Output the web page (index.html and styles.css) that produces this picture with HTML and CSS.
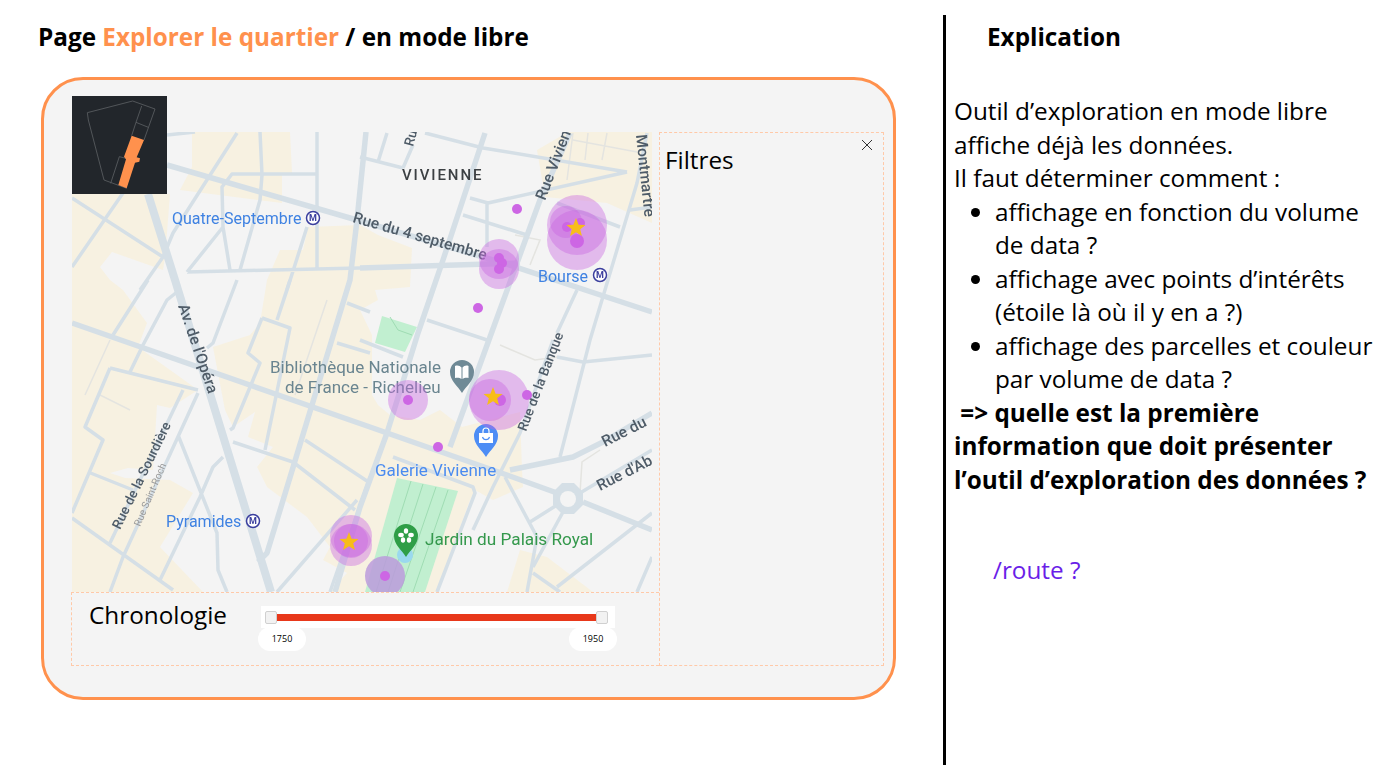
FILE: index.html
```html
<!DOCTYPE html>
<html lang="fr">
<head>
  <meta charset="UTF-8" />
  <title>Explorer le quartier</title>
  <link rel="stylesheet" href="styles.css">
</head>
<body>
  <div class="page">

    <!-- Maquette -->
    <section class="left">
      <h1 class="page-title">Page <span class="accent">Explorer le quartier</span> / en mode libre</h1>

      <div class="frame">
        <div class="map-cell">
          <svg class="minimap" viewBox="0 0 285 294">
            <path class="mini-line" d="M46 50 L182 15 L249 39 L216 132 M46 50 L49 72 L96 252 L164 277 M209 30 L192 79 L229 94 M192 79 L179 119 M142 182 L116 262 M142 182 L162 187"/>
            <path class="mini-fill" d="M179 119 L216 132 L194 184 L204 187 L202 197 L189 200 L164 277 L139 267 L162 190 L156 182 Z"/>
          </svg>

          <svg class="map" viewBox="72 132 580 460">
            <defs>
              <polygon id="star" points="0,-10 2.6,-3.3 9.5,-3.1 4.2,1.3 5.9,8.1 0,4.3 -5.9,8.1 -4.2,1.3 -9.5,-3.1 -2.6,-3.3"/>
            </defs>

            <rect class="ground" x="72" y="132" width="580" height="460"/>

            <g class="tiles">
              <!-- Ilots -->
              <g class="blocks">
                <polygon points="192,132 290,132 292,173 282,173 282,203 180,190 192,167"/>
                <polygon points="72,194 170,194 165,258 163,270 112,252 100,267 110,280 123,290 147,323 138,347 198,390 170,408 157,405 153,470 128,468 110,473 125,478 170,480 193,493 160,547 203,592 72,592"/>
                <polygon points="280,250 303,250 308,227 360,225 378,235 412,248 410,287 375,290 378,300 360,310 372,335 372,395 378,405 390,415 420,420 440,410 462,427 520,412 522,470 523,487 493,500 475,490 470,500 437,592 330,592 347,573 323,560 330,547 307,517 267,487 257,467 273,447 248,437 255,412 233,427 225,410 213,347 250,335 260,323 267,280"/>
                <polygon points="537,150 568,132 652,132 652,223 607,203 545,197"/>
                <polygon points="507,592 520,550 547,557 593,592"/>
              </g>

              <!-- Parcs -->
              <g class="parks">
                <polygon points="382,316 417,327 405,352 375,343"/>
                <polygon points="397,478 458,491 425,592 365,592"/>
              </g>
              <path class="park-line" d="M411 481 L376 592 M423 484 L388 592 M436 487 L400 592 M448 490 L413 592 M390 317 L398 330 L412 335"/>

              <!-- Rues fines -->
              <path class="thin" d="M573 133 L567 180 M588 133 L585 160 M607 133 L602 160 M573 140 L637 152 M110 340 L85 395 M100 395 L130 410 M327 300 L295 395 M500 345 L535 360 L557 357 M600 450 L582 462 L580 493 M515 235 L540 240 L530 265"/>

              <!-- Petites rues -->
              <g class="lanes">
                <path d="M237 133 L173 233 L163 257 M260 132 L262 175 L260 200 L240 270 M317 132 L317 270 M232 174 L317 174 L232 174 L222 187 L223 227 L230 270 M223 227 L187 272 M187 272 L360 268 M72 198 L163 257 L140 290 M72 267 L123 193 M307 227 L287 290 M167 135 L195 132"/>
                <path d="M148 280 L113 335 M177 292 L167 300 L143 345 L130 372 M237 280 L213 343 L207 348 M110 368 L198 390 M110 368 L85 427 L103 440 L72 513 M88 472 L133 490 M72 518 L173 590 M198 393 L123 557 L110 592 M183 390 L110 543 M178 435 L217 533 L218 570 L227 592 M223 457 L213 467 L200 497 L160 580"/>
                <path d="M290 280 L277 320 M262 318 L290 328 L265 450 M262 318 L248 353 L260 363 L233 428 L230 430 M233 442 L293 462 L355 510 M305 440 L370 483 M347 303 L370 312 M337 343 L370 353 M357 500 L277 592 M370 477 L330 592 M287 290 L277 320"/>
                <path d="M360 157 L403 168 M387 133 L378 162 M413 145 L403 168 M425 133 L483 148 L627 172 M470 198 L488 203 L627 172 M487 203 L487 247 M463 215 L527 235 M557 203 L620 227 M647 133 L637 183 L590 340 L560 457 M630 210 L652 207 M577 290 L557 333 M427 320 L487 340 M360 340 L403 357"/>
                <path d="M553 340 L520 433 L493 487 L473 530 M557 357 L583 362 L652 355 M505 477 L537 537 L527 592 M530 522 L557 505 M563 512 L533 567 M652 513 L557 587 M652 557 L637 592 M533 573 L560 592 M393 457 L473 487 L475 493 L437 592 M580 493 L652 450"/>
              </g>

              <!-- Grands axes -->
              <g class="roads">
                <path d="M167 165 L350 218 L500 262 L652 312"/>
                <path d="M360 268 L520 263"/>
                <path d="M72 323 L370 427 L507 475 L557 493 M583 502 L652 530"/>
                <path d="M148 194 L175 280 L271 592" class="avenue"/>
                <path d="M485 133 L443 260 L418 333 L387 433 L360 507 L335 592"/>
                <path d="M366 132 L357 220 L350 280 L267 553 L258 562"/>
                <path d="M570 133 L540 200 L490 337 L450 447"/>
                <path d="M510 470 L573 457 L603 442 L652 413"/>
              </g>
              <polygon class="rond" points="562,483 574,483 583,492 583,505 574,514 562,514 553,505 553,492"/>
              <circle class="rond-hole" cx="568" cy="499" r="8"/>

              <!-- Noms des rues -->
              <text class="district" x="402" y="180">VIVIENNE</text>
              <text class="street" transform="translate(352 222) rotate(16)">Rue du 4 septembre</text>
              <text class="street" transform="translate(545 201) rotate(-69)">Rue Vivien</text>
              <text class="street" transform="translate(636 135) rotate(84)">Montmartre</text>
              <text class="street small" transform="translate(413 147) rotate(-75)">Ru</text>
              <text class="street" transform="translate(178 306) rotate(71)">Av. de l'Opéra</text>
              <text class="street small" transform="translate(120 530) rotate(-64)">Rue de la Sourdière</text>
              <text class="street tiny" transform="translate(140 527) rotate(-67)">Rue Saint-Roch</text>
              <text class="street small" transform="translate(526 432) rotate(-69)">Rue de la Banque</text>
              <text class="street" transform="translate(605 447) rotate(-27)">Rue du</text>
              <text class="street" transform="translate(600 491) rotate(-27)">Rue d'Ab</text>

              <!-- Lieux -->
              <text class="poi transit" x="172" y="224">Quatre-Septembre</text>
              <text class="poi transit" x="538" y="282">Bourse</text>
              <text class="poi transit" x="166" y="527">Pyramides</text>
              <text class="poi grey" x="270" y="373">Bibliothèque Nationale</text>
              <text class="poi grey" x="285" y="393">de France - Richelieu</text>
              <text class="poi shop" x="375" y="476">Galerie Vivienne</text>
              <text class="poi garden" x="425" y="545">Jardin du Palais Royal</text>

              <g class="metro">
                <circle cx="313" cy="218" r="6.5"/><text x="313" y="221">M</text>
                <circle cx="600" cy="275" r="6.5"/><text x="600" y="278">M</text>
                <circle cx="253" cy="521" r="6.5"/><text x="253" y="524">M</text>
              </g>

              <!-- Epingles -->
              <path class="pin-grey" d="M462 393 C458 386 450 381 450 372 A12 12 0 0 1 474 372 C474 381 466 386 462 393 Z"/>
              <path class="pin-mark" d="M455 366 C458 365 460 366 461.500 367.500 V379 C460 378 458 377.500 455 378 Z M468.500 366 C466 365 464 366 462.500 367.500 V379 C464 378 466 377.500 468.500 378 Z"/>
              <circle class="pond" cx="405" cy="555" r="8"/>
              <path class="pin-shop" d="M486 457 C482 450 474 445 474 436 A12 12 0 0 1 498 436 C498 445 490 450 486 457 Z"/>
              <path class="pin-mark" d="M479 433 H493 V443 H479 Z"/>
              <path class="pin-handle" d="M483 433 V431 A3 3 0 0 1 489 431 V433"/>
              <path class="pin-smile" d="M482.500 437 C483.500 440.500 488.500 440.500 489.500 437"/>
              <path class="pin-green" d="M406 557 C402 550 394 545 394 536 A12 12 0 0 1 418 536 C418 545 410 550 406 557 Z"/>
              <g class="pin-mark">
                <ellipse cx="406" cy="531" rx="2.200" ry="2.800"/>
                <ellipse cx="401" cy="535" rx="2.800" ry="2.200"/>
                <ellipse cx="411" cy="535" rx="2.800" ry="2.200"/>
                <ellipse cx="403" cy="540" rx="2.200" ry="2.800"/>
                <ellipse cx="409" cy="540" rx="2.200" ry="2.800"/>
              </g>
            </g>

            <!-- Points de donnees -->
            <g class="halos">
              <circle cx="577" cy="225" r="30"/><circle cx="577" cy="240" r="30"/><circle cx="566" cy="222" r="16"/>
              <circle cx="499" cy="259" r="20"/><circle cx="499" cy="269" r="20"/>
              <circle cx="408" cy="400" r="20"/>
              <circle cx="499" cy="400" r="30"/><circle cx="490" cy="400" r="21"/>
              <circle cx="351" cy="536" r="21"/><circle cx="351" cy="545" r="21"/><circle cx="351" cy="541" r="17"/>
              <circle class="on-park" cx="385" cy="576" r="20"/>
            </g>
            <g class="dots">
              <circle cx="577" cy="241" r="7"/><circle cx="567" cy="227" r="5"/><circle cx="580" cy="223" r="5"/>
              <circle cx="499" cy="258" r="5"/><circle cx="502" cy="263" r="5"/><circle cx="499" cy="269" r="5"/>
              <circle cx="517" cy="209" r="5"/><circle cx="478" cy="308" r="5"/>
              <circle cx="408" cy="400" r="5"/><circle cx="500" cy="400" r="6"/><circle cx="527" cy="395" r="5"/>
              <circle cx="438" cy="447" r="5"/><circle cx="385" cy="576" r="5"/>
            </g>
            <use class="star" href="#star" x="576" y="228"/>
            <use class="star" href="#star" x="493" y="397"/>
            <use class="star" href="#star" x="349" y="542"/>
          </svg>
        </div>

        <aside class="filters">
          <h2 class="panel-title">Filtres</h2>
          <svg class="close" viewBox="0 0 12 12"><path d="M1 1 L11 11 M11 1 L1 11"/></svg>
        </aside>

        <div class="timeline">
          <h2 class="panel-title">Chronologie</h2>
          <div class="range">
            <div class="range-bar">
              <span class="handle"></span>
              <span class="range-track"></span>
              <span class="handle"></span>
            </div>
            <div class="range-labels">
              <span>1750</span>
              <span>1950</span>
            </div>
          </div>
        </div>
      </div>
    </section>

    <!-- Explication -->
    <section class="right">
      <h1 class="side-title">Explication</h1>
      <p>Outil d’exploration en mode libre affiche déjà les données.<br>Il faut déterminer comment :</p>
      <ul>
        <li>affichage en fonction du volume de data ?</li>
        <li>affichage avec points d’intérêts (étoile là où il y en a ?)</li>
        <li>affichage des parcelles et couleur par volume de data ?</li>
      </ul>
      <p class="question">&nbsp;=&gt; quelle est la première information que doit présenter l’outil d’exploration des données ?</p>
      <p class="route">/route ?</p>
    </section>

  </div>
</body>
</html>
```

FILE: styles.css
```css
* {
  box-sizing: border-box;
}

body {
  margin: 0;
  background-color: #ffffff;
  color: #000000;
  font-family: "Open Sans", sans-serif;
  font-size: 24.3px;
  overflow: hidden;
}

h1, h2, p, ul {
  margin: 0;
  padding: 0;
}

.page {
  display: flex;
  height: 765px;
}

/* Colonne gauche */
.left {
  width: 943px;
  flex: none;
  padding: 20px 0 0 38px;
}

.page-title,
.side-title {
  font-size: 24.3px;
  font-weight: 700;
  line-height: 33px;
}

.accent {
  color: #ff914d;
}

.frame {
  display: grid;
  grid-template-columns: 588px 225px;
  grid-template-rows: 460px 74px;
  width: 855px;
  height: 623px;
  margin: 24px 0 0 3px;
  padding: 52px 0 0 27px;
  background-color: #f4f4f4;
  border: 3px solid #ff914d;
  border-radius: 42px;
}

.map-cell {
  position: relative;
  padding-left: 1px;
}

.map {
  display: block;
  width: 580px;
  height: 460px;
}

.minimap {
  position: absolute;
  top: -36px;
  left: 1px;
  z-index: 1;
  width: 95px;
  height: 98px;
  background-color: #22262b;
}

.mini-line {
  fill: none;
  stroke: #5c5f63;
  stroke-width: 2.5;
}

.mini-fill {
  fill: #ff914d;
}

/* Carte */
.ground { fill: #f4f4f4; }
.tiles { filter: blur(0.35px); }
.blocks { fill: #f7f1e1; }
.parks { fill: #c1efd0; }

.park-line {
  fill: none;
  stroke: #9fdcb3;
  stroke-width: 1;
}

.thin {
  fill: none;
  stroke: #e4e4e0;
  stroke-width: 1.5;
}

.lanes,
.roads {
  fill: none;
  stroke: #d5dfe6;
  stroke-linejoin: round;
}

.lanes { stroke-width: 3.5; }
.roads { stroke-width: 5.5; }
.roads .avenue { stroke-width: 8; }

.rond { fill: #d5dfe6; }
.rond-hole { fill: #f4f4f4; }

.map text {
  font-family: Roboto, sans-serif;
}

.map .district {
  fill: #3c4043;
  font-size: 15px;
  font-weight: 500;
  letter-spacing: 1.9px;
}

.street {
  fill: #4f5c68;
  font-size: 15.500px;
  font-weight: 500;
}

.street.small { font-size: 13.500px; }

.street.tiny {
  fill: #9a9a9a;
  font-size: 10px;
  font-weight: 400;
}

.poi { font-size: 16px; }
.poi.transit { fill: #3f82e2; }
.poi.grey { fill: #6a8590; font-size: 17px; }
.poi.shop { fill: #4a8bf0; font-size: 17px; }
.poi.garden { fill: #34984c; font-size: 17.200px; }

.metro circle {
  fill: #ffffff;
  stroke: #3b3f9e;
  stroke-width: 1.5;
}

.metro text {
  fill: #3b3f9e;
  font-size: 9px;
  font-weight: 700;
  text-anchor: middle;
}

.pin-grey { fill: #6f8a96; }
.pin-shop { fill: #4d8df5; }
.pin-green { fill: #2f9e47; }
.pin-mark { fill: #ffffff; }
.pond { fill: #9ad9ee; }

.pin-handle {
  fill: none;
  stroke: #ffffff;
  stroke-width: 1.2;
}

.pin-smile {
  fill: none;
  stroke: #4d8df5;
  stroke-width: 1.2;
}

.halos { fill: #c764e0; fill-opacity: 0.4; }
.halos .on-park { fill: #bb9bdc; fill-opacity: 0.85; }
.dots { fill: #cd66e4; }
.star { fill: #f8bd19; }

/* Panneaux */
.panel-title {
  font-size: 24.3px;
  font-weight: 400;
  line-height: 33px;
}

.filters {
  grid-column: 2;
  grid-row: 1 / 3;
  display: flex;
  justify-content: space-between;
  align-items: flex-start;
  padding: 10px 10px 0 5px;
  border: 1px dashed #ffc9a8;
}

.close {
  width: 12px;
  height: 12px;
  margin-top: -4px;
  fill: none;
  stroke: #333333;
  stroke-width: 1;
}

.timeline {
  grid-column: 1;
  grid-row: 2;
  display: flex;
  justify-content: space-between;
  align-items: flex-start;
  padding: 5px 42px 0 17px;
  border: 1px dashed #ffc9a8;
  border-right: none;
}

.range {
  width: 359px;
  margin-top: 8px;
}

.range-bar {
  display: flex;
  align-items: center;
  height: 22px;
  margin: 0 2px 0 3px;
  padding: 0 7px 0 4px;
  background-color: #ffffff;
}

.handle {
  flex: none;
  width: 12px;
  height: 13px;
  background-color: #f2f2f2;
  border: 1px solid #d0d0d0;
  border-radius: 2px;
}

.range-track {
  flex: 1;
  height: 7px;
  background-color: #e8381a;
}

.range-labels {
  display: flex;
  justify-content: space-between;
  margin-top: -1px;
}

.range-labels span {
  width: 48px;
  height: 24px;
  background-color: #ffffff;
  border-radius: 12px;
  font-size: 9px;
  line-height: 24px;
  text-align: center;
}

/* Colonne droite */
.right {
  flex: 1;
  height: 750px;
  margin-top: 15px;
  padding: 5px 6px 0 8px;
  border-left: 3px solid #000000;
  line-height: 33.5px;
}

.side-title {
  margin: 0 0 41px 33px;
}

.right ul {
  padding-left: 41px;
}

.question {
  font-weight: 700;
}

.route {
  margin: 57px 0 0 39px;
  color: #6a1ee8;
}
```
